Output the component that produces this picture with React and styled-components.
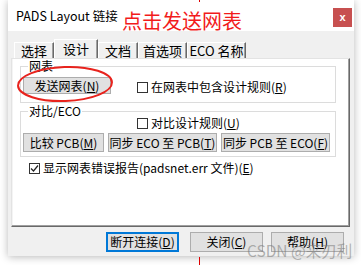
import styled, { createGlobalStyle } from "styled-components";

const GlobalStyle = createGlobalStyle`
  html, body {
    margin: 0;
    padding: 0;
    background: #ffffff;
  }
  body {
    font-family: "Noto Sans CJK SC", "Noto Sans", sans-serif;
    font-size: 12px;
    color: #000;
  }
`;

const Page = styled.div`
  position: relative;
  width: 361px;
  height: 265px;
  overflow: hidden;
  padding-left: 8px;
  box-sizing: border-box;
`;

const Window = styled.div`
  width: 346px;
  height: 256px;
  background: #f0f0f0;
  box-shadow: 0 1px 8px rgba(0, 0, 0, 0.28);
  display: flex;
  flex-direction: column;
`;

const TitleBar = styled.div`
  height: 31px;
  flex-shrink: 0;
  background: #fff;
  display: flex;
  align-items: flex-start;
  padding-left: 8px;
`;

const Title = styled.div`
  margin-top: 7px;
  font-size: 12.5px;
  line-height: 18px;
`;

const CloseBtn = styled.div`
  margin: 8px 2px 0 auto;
  width: 19px;
  height: 19px;
  background: #c75050;
  color: #fff;
  font: bold 11px/18px "Liberation Sans", sans-serif;
  text-align: center;
`;

const Body = styled.div`
  flex: 1;
  display: flex;
  flex-direction: column;
  padding: 8px 4px 0 3px;
`;

const Tabs = styled.div`
  display: flex;
  align-items: flex-end;
  height: 19px;
  padding-left: 3px;
`;

const Tab = styled.div`
  width: ${(p) => p.$w}px;
  height: ${(p) => (p.$active ? 19 : 16)}px;
  box-sizing: border-box;
  background: #f0f0f0;
  border-top: 1px solid #fff;
  border-left: 1px solid #fff;
  border-right: 1px solid #696969;
  box-shadow: inset -1px 0 #a0a0a0;
  font-size: 13px;
  line-height: ${(p) => (p.$active ? 18 : 15)}px;
  text-align: center;
  position: relative;
  z-index: ${(p) => (p.$active ? 1 : 0)};
`;

const Panel = styled.div`
  height: 169px;
  box-sizing: border-box;
  background: #fff;
  border-top: 1px solid #e3e3e3;
  border-left: 1px solid #e3e3e3;
  border-right: 1px solid #696969;
  border-bottom: 1px solid #696969;
  box-shadow: inset -1px -1px #a0a0a0, inset 1px 0 #f4f4f4;
  padding: 7px 0 0 8px;
  display: flex;
  flex-direction: column;
`;

const Group = styled.div`
  width: 316px;
  box-sizing: border-box;
  border: 1px solid #dcdcdc;
  margin-bottom: ${(p) => p.$mb || 0}px;
  padding: 0 0 ${(p) => p.$pb || 0}px 2px;
`;

const Legend = styled.div`
  width: fit-content;
  margin: -8px 0 0 5px;
  padding: 0 1px;
  background: #fff;
  line-height: 14px;
`;

const Row = styled.div`
  display: flex;
  align-items: ${(p) => p.$align || "center"};
  gap: ${(p) => p.$gap || 0}px;
  margin-top: ${(p) => p.$mt || 0}px;
  padding-left: ${(p) => p.$pl || 0}px;
`;

const Button = styled.div`
  width: ${(p) => p.$w}px;
  height: ${(p) => p.$h || 19}px;
  box-sizing: border-box;
  background: #e1e1e1;
  border: ${(p) => (p.$default ? "2px solid #0078d7" : "1px solid #adadad")};
  line-height: ${(p) => (p.$h || 19) - (p.$default ? 4 : 2)}px;
  text-align: center;
  white-space: nowrap;
  margin-right: ${(p) => p.$mr || 0}px;
`;

const Check = styled.label`
  display: flex;
  align-items: center;
  gap: 3px;
  margin-left: ${(p) => p.$ml || 0}px;
  line-height: 14px;
  white-space: nowrap;
`;

const Box = styled.span`
  width: 11px;
  height: 11px;
  box-sizing: border-box;
  border: 1px solid #333;
  background: #fff;
  display: flex;
  align-items: center;
  justify-content: center;
`;

const Footer = styled.div`
  height: 29px;
  display: flex;
  justify-content: flex-end;
  align-items: flex-start;
  padding: 5px 6px 0 0;
  gap: 8px;
`;

const Ellipse = styled.svg`
  position: absolute;
  left: 14px;
  top: 64px;
`;

const Annotation = styled.div`
  position: absolute;
  left: 122px;
  top: 11px;
  font-size: 20px;
  line-height: 20px;
  color: #f21b1b;
`;

const Watermark = styled.div`
  position: absolute;
  left: 247px;
  top: 241px;
  font-size: 15.5px;
  line-height: 18px;
  color: rgba(120, 120, 120, 0.55);
  white-space: nowrap;
  pointer-events: none;
`;

const RedMark = styled.div`
  position: absolute;
  left: 199px;
  top: ${(p) => p.$top}px;
  width: 1px;
  height: ${(p) => p.$h}px;
  background: #d00;
`;

const CheckBox = ({ checked }) => (
  <Box>
    {checked && (
      <svg width="9" height="9" viewBox="0 0 9 9">
        <path d="M1 4.5 L3.5 7 L8 1.5" fill="none" stroke="#222" strokeWidth="1.2" />
      </svg>
    )}
  </Box>
);

const App = () => {
  return (
    <Page>
      <GlobalStyle />
      <Window>
        <TitleBar>
          <Title>PADS Layout 链接</Title>
          <CloseBtn>x</CloseBtn>
        </TitleBar>
        <Body>
          <Tabs>
            <Tab $w={40}>选择</Tab>
            <Tab $w={44} $active>设计</Tab>
            <Tab $w={40}>文档</Tab>
            <Tab $w={49}>首选项</Tab>
            <Tab $w={59}>ECO 名称</Tab>
          </Tabs>
          <Panel>
            <Group $mb={8} $pb={8}>
              <Legend>网表</Legend>
              <Row $mt={4} $align="flex-end">
                <Button $w={88} $h={17}>
                  发送网表(<u>N</u>)
                </Button>
                <Check $ml={26}>
                  <CheckBox />
                  <span>在网表中包含设计规则(<u>R</u>)</span>
                </Check>
              </Row>
            </Group>
            <Group $pb={4}>
              <Legend>对比/ECO</Legend>
              <Row $mt={-2}>
                <Check $ml={114}>
                  <CheckBox />
                  <span>对比设计规则(<u>U</u>)</span>
                </Check>
              </Row>
              <Row $mt={3} $gap={4}>
                <Button $w={81}>
                  比较 PCB(<u>M</u>)
                </Button>
                <Button $w={109}>
                  同步 ECO 至 PCB(<u>T</u>)
                </Button>
                <Button $w={109}>
                  同步 PCB 至 ECO(<u>F</u>)
                </Button>
              </Row>
            </Group>
            <Row $mt={4} $pl={9}>
              <Check>
                <CheckBox checked />
                <span>显示网表错误报告(padsnet.err 文件)(<u>E</u>)</span>
              </Check>
            </Row>
          </Panel>
          <Footer>
            <Button $w={73} $h={20} $default $mr={3}>
              断开连接(<u>D</u>)
            </Button>
            <Button $w={73} $h={20}>
              关闭(<u>C</u>)
            </Button>
            <Button $w={73} $h={20}>
              帮助(<u>H</u>)
            </Button>
          </Footer>
        </Body>
      </Window>
      <Annotation>点击发送网表</Annotation>
      <Ellipse width="102" height="42" viewBox="0 0 102 42">
        <ellipse cx="51" cy="20" rx="47" ry="17" fill="none" stroke="#e8231d" strokeWidth="2" transform="rotate(-2 51 20)" />
      </Ellipse>
      <Watermark>CSDN @来刃利</Watermark>
      <RedMark $top={0} $h={2} />
      <RedMark $top={257} $h={8} />
    </Page>
  );
};

export default App;
